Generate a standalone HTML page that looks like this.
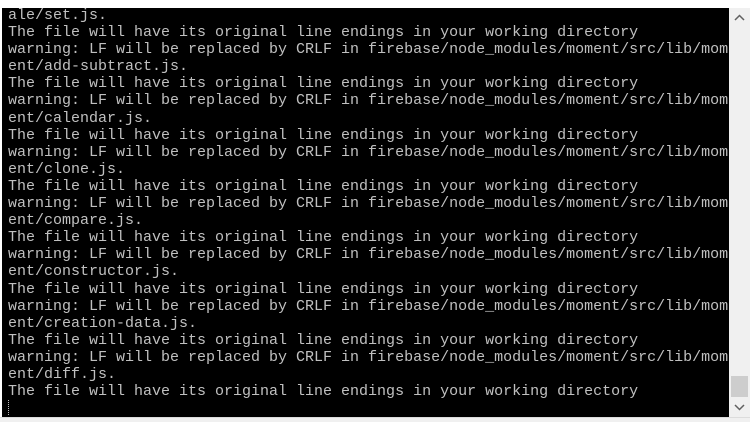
<!DOCTYPE html>
<html><head><style>
body{margin:0;width:750px;height:421px;background:#fff;overflow:hidden;position:relative}
#t{position:absolute;left:2px;top:8px;width:727px;height:409px;background:#000;overflow:hidden}
pre{margin:0;position:absolute;left:6px;top:-1px;font:15px/17.1px "Liberation Mono",monospace;color:#c0c0c0;letter-spacing:0}
#sb{position:absolute;left:729px;top:8px;width:21px;height:409px;background:#f0f0f0}
#th{position:absolute;left:731px;top:376px;width:17px;height:21px;background:#cdcdcd}
#bot{position:absolute;left:0;top:417px;width:750px;height:4px;background:#f0f0f0;border-top:1px solid #dcdcdc}
#cur{position:absolute;left:8px;top:400px;width:1px;height:15px;border-left:1px dotted #c0c0c0}
</style></head><body>
<div id="t"><pre>ale/set.js.
The file will have its original line endings in your working directory
warning: LF will be replaced by CRLF in firebase/node_modules/moment/src/lib/mom
ent/add-subtract.js.
The file will have its original line endings in your working directory
warning: LF will be replaced by CRLF in firebase/node_modules/moment/src/lib/mom
ent/calendar.js.
The file will have its original line endings in your working directory
warning: LF will be replaced by CRLF in firebase/node_modules/moment/src/lib/mom
ent/clone.js.
The file will have its original line endings in your working directory
warning: LF will be replaced by CRLF in firebase/node_modules/moment/src/lib/mom
ent/compare.js.
The file will have its original line endings in your working directory
warning: LF will be replaced by CRLF in firebase/node_modules/moment/src/lib/mom
ent/constructor.js.
The file will have its original line endings in your working directory
warning: LF will be replaced by CRLF in firebase/node_modules/moment/src/lib/mom
ent/creation-data.js.
The file will have its original line endings in your working directory
warning: LF will be replaced by CRLF in firebase/node_modules/moment/src/lib/mom
ent/diff.js.
The file will have its original line endings in your working directory</pre></div>
<div id="cur"></div>
<div id="sb"></div>
<div id="th"></div>
<svg style="position:absolute;left:734px;top:14px" width="11" height="8"><path d="M1 6 L5.5 1.5 L10 6" stroke="#606060" stroke-width="1.5" fill="none"/></svg>
<svg style="position:absolute;left:734px;top:403px" width="11" height="8"><path d="M1 2 L5.5 6.5 L10 2" stroke="#606060" stroke-width="1.5" fill="none"/></svg>
<div id="bot"></div>
</body></html>
